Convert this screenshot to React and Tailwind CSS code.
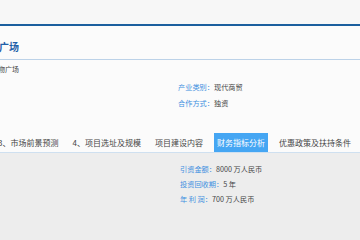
const tabs = ['3、市场前景预测', '4、项目选址及规模', '项目建设内容', '财务指标分析', '优惠政策及扶持条件']

const finance = [
  { label: '引资金额', value: '8000 万人民币' },
  { label: '投资回收期', value: '5 年' },
  { label: '年 利 润', value: '700 万人民币' },
]

export default function App() {
  return (
    <div className="w-[360px] h-[240px] overflow-hidden bg-[#ededed] font-['Noto_Sans_CJK_SC',sans-serif]">
      <div className="h-[24px] bg-[#f7f7f7]" />
      <div className="h-[2px] bg-[#1b5f9e]" />
      <div className="bg-[#fbfbfb]">
        <div className="h-[33px] flex items-end pb-[5px]">
          <div className="w-[19px] overflow-hidden flex justify-end">
            <h1 className="whitespace-nowrap text-[10px] leading-[14px] font-bold text-[#1f60a8]">
              商业购物广场
            </h1>
          </div>
        </div>
        <div className="h-px bg-[#bcd2e8]" />
        <div className="h-[19px] flex items-center">
          <div className="w-[19px] overflow-hidden flex justify-end">
            <p className="whitespace-nowrap text-[7px] text-[#444]">商业购物广场</p>
          </div>
        </div>
        <div className="pl-[178px] text-[7.2px] leading-[16px]">
          <p>
            <span className="text-[#3d8fe0]">产业类别：</span>
            <span className="text-[#444]">现代商贸</span>
          </p>
          <p>
            <span className="text-[#3d8fe0]">合作方式：</span>
            <span className="text-[#444]">独资</span>
          </p>
        </div>
        <div className="h-[22px]" />
        <div className="flex gap-[8px] ml-[-5px] h-[20px] border-b border-[#cfe0f0]">
          {tabs.map((t) => (
            <div
              key={t}
              className={`px-[3px] flex items-center whitespace-nowrap text-[8px] ${
                t === '财务指标分析' ? 'bg-[#45a6f3] text-white' : 'text-[#444]'
              }`}
            >
              {t}
            </div>
          ))}
        </div>
      </div>
      <div className="pl-[180px] pt-[9px] text-[7.2px] leading-[15px]">
        {finance.map((f) => (
          <p key={f.label}>
            <span className="text-[#3d8fe0]">{f.label}：</span>
            <span className="text-[#444]">{f.value}</span>
          </p>
        ))}
      </div>
    </div>
  )
}
